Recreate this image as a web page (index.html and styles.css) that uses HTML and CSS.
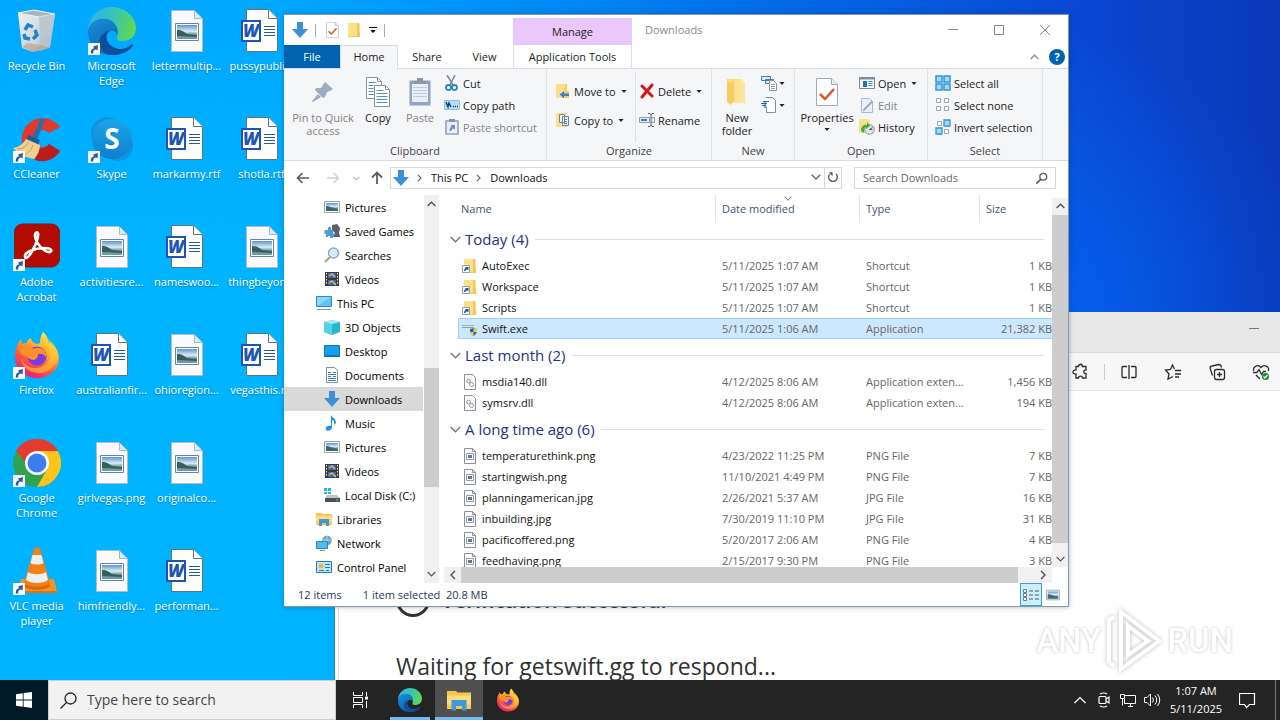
FILE: index.html
```html
<!DOCTYPE html>
<html lang="en">
<head>
<meta charset="utf-8">
<title>Downloads</title>
<link rel="stylesheet" href="styles.css">
</head>
<body>
<svg class="sprite" aria-hidden="true">
  <defs>
    <linearGradient id="g-edge-top" x1="0" y1="0.3" x2="1" y2="0.5"><stop offset="0" stop-color="#2fb3ea"/><stop offset="0.5" stop-color="#36c4b8"/><stop offset="1" stop-color="#63d84b"/></linearGradient>
    <linearGradient id="g-edge-left" x1="0" y1="0" x2="0.6" y2="1"><stop offset="0" stop-color="#1b8fd8"/><stop offset="1" stop-color="#0a62b4"/></linearGradient>
    <linearGradient id="g-fox" x1="0.8" y1="0" x2="0.25" y2="1"><stop offset="0" stop-color="#fff44f"/><stop offset="0.35" stop-color="#ffb02a"/><stop offset="0.65" stop-color="#ff5a3a"/><stop offset="1" stop-color="#e31587"/></linearGradient>
    <linearGradient id="g-scene" x1="0" y1="0" x2="0" y2="1"><stop offset="0" stop-color="#5f93d6"/><stop offset="0.45" stop-color="#dcecf5"/><stop offset="0.6" stop-color="#8fb3ad"/><stop offset="1" stop-color="#2f5b6c"/></linearGradient>
    <linearGradient id="g-folder" x1="0" y1="0" x2="1" y2="0"><stop offset="0" stop-color="#fbd978"/><stop offset="1" stop-color="#fce9a8"/></linearGradient>
    <linearGradient id="g-bin" x1="0" y1="0" x2="1" y2="1"><stop offset="0" stop-color="#eef2f4"/><stop offset="0.6" stop-color="#cfd8dc"/><stop offset="1" stop-color="#8fa3b0"/></linearGradient>
    <linearGradient id="g-skype" x1="0" y1="0" x2="0" y2="1"><stop offset="0" stop-color="#1aa6ea"/><stop offset="1" stop-color="#0f7fd0"/></linearGradient>
  </defs>

  <symbol id="link" viewBox="0 0 12 12"><path d="M0 0h12v12H0z" fill="#f6f8fa"/><path d="M3 10.500C2.500 7 4 5.500 6.200 5.200L5 3.500 10 2l-.5 5.500L8 6.500C6 6.500 5 8 5.200 10.500z" fill="#2c5b9c"/></symbol>

  <symbol id="bin" viewBox="0 0 48 48"><path d="M5 6l16-3 21 4-5 34-17 4-11-4z" fill="url(#g-bin)"/><path d="M5 6l16-3 21 4-16 3z" fill="#a9b6bf" stroke="#eef3f6"/><path d="M26 10l16-3-5 33-10 4z" fill="#b5c3cc" opacity=".8"/><path d="M9 40l11 5 17-4-9-3-14-2z" fill="#b98b6d" opacity=".45"/><g fill="none" stroke="#1f82cc" stroke-width="3.500"><path d="M12 23l3-5 5 2"/><path d="M22 23l2 5-4 4"/><path d="M17 32l-5-1-1-4"/></g></symbol>

  <symbol id="edge" viewBox="0 0 48 48"><path d="M0 24C0 10 11 0 24 0s24 10 24 21c0 9-7 13-14 13-5 0-6-2-4.500-4.500C31 25 29 13 17 12 8 12 3 16 0 24z" fill="url(#g-edge-top)"/><path d="M0 24c1-8 9-13 18-12 8 1 13 9 11.500 16C27 22 20 22 18 30c-1 9 7 15 17 15-5 3-12 4-19 2C6 44 0 35 0 24z" fill="url(#g-edge-left)"/><path d="M21 24c-5 4-3 16 10 18 5 .6 9-2 12-4 2-1 3 0 1 2-6 7-17 10-26 6-10-6-8-20 3-22z" fill="#114d99"/></symbol>

  <symbol id="image-doc" viewBox="0 0 48 48"><path d="M8.500 3.500h23l8 8v33h-31z" fill="#fafafa" stroke="#b5bcc2"/><path d="M31.500 3.500v8h8z" fill="#d3ecf9" stroke="#a9b7c2"/><path d="M12.500 16.500h23v17h-23z" fill="#fff" stroke="#5f86ad"/><path d="M14 18h20v14H14z" fill="url(#g-scene)"/><path d="M14 23c5 0 7 2 10 4l10 1v4H14z" fill="#355f58"/><path d="M14 29l20 1v2H14z" fill="#6f98b5"/></symbol>

  <symbol id="word-doc" viewBox="0 0 48 48"><path d="M8.500 2.500h22l9 9v33h-31z" fill="#fdfdfd" stroke="#61727f"/><path d="M30.500 2.500v9h9" fill="#fff" stroke="#61727f"/><path d="M26 19.500h11M26 22.500h11M26 25.500h11M26 28.500h11" stroke="#2b579a"/><path d="M4 14h18v20H4z" fill="#fff" stroke="#1d55b5" stroke-width="2"/><text x="13" y="30" class="word-letter">W</text></symbol>

  <symbol id="ccleaner" viewBox="0 0 48 48"><path d="M47 12A21 21 0 1 0 47 36l-11-7a8.500 8.500 0 1 1 0-11z" fill="#e3382c"/><path d="M47 36A21 21 0 0 1 22 45l4-12c4 1 7 0 10-4z" fill="#b81d1c"/><path d="M28 3l4 2-8 20-5-2z" fill="#2770ad"/><path d="M15 20l12 5-2 6-12-5z" fill="#1c5c96"/><path d="M13 24l14 6c0 7-4 12-6 14C14 43 5 39 0 33c6-1 10-4 13-9z" fill="#efcf94"/><path d="M4 34c7 0 9-3 12-7M11 40c5-2 8-6 9-10" fill="none" stroke="#c99c58"/></symbol>

  <symbol id="skype" viewBox="0 0 48 48"><circle cx="19" cy="18" r="16" fill="#1492de"/><circle cx="30" cy="31" r="15" fill="#1094dc"/><circle cx="24" cy="24" r="20" fill="url(#g-skype)"/><text x="24" y="34" class="skype-letter">S</text></symbol>

  <symbol id="acrobat" viewBox="0 0 48 48"><rect x="1.500" y="1" width="45" height="43" rx="8" fill="#b30b00" stroke="#7e1c22"/><path d="M12 33c0-4 10-8 20-8 6 0 8 3 5 4-5 1-14-8-15-16 0-5 4-5 3 0-1 8-9 22-12 22-1 0-1-1-1-2z" fill="none" stroke="#fff" stroke-width="2.600"/></symbol>

  <symbol id="firefox" viewBox="0 0 48 48"><path d="M30 1c4 3 5 7 5 10 8 3 11 10 11 16 0 12-10 20-22 20S2 38 2 26C2 18 4 13 8 8l1 5c2-1 3-1 5-1 0-2 1-4 4-5 0 3 2 5 6 6l3-1c0-4 1-8 3-11z" fill="url(#g-fox)"/><path d="M43 18c5 14-5 24-17 24-10 0-18-7-18-15 4 9 13 12 20 9 8-3 10-10 8-19l-6-12c8 4 12 8 13 13z" fill="#ffd13c" opacity=".55"/><circle cx="24" cy="25" r="9.500" fill="#7a3ce0"/><path d="M20 18c9-4 14 3 13 8-2-3-5-4-8-3 0 3-1 5-4 6-4 0-7-4-10-4-4-2-7-9-3-14 1 2 3 3 5 3 2-1 5-1 7 4z" fill="#ff902a"/></symbol>

  <symbol id="chrome" viewBox="0 0 48 48"><circle cx="24" cy="24" r="24" fill="#31a350"/><path d="M3.200 12A24 24 0 0 1 44.800 12H24L13.600 18z" fill="#e33b2e"/><path d="M3.200 12h.1L13 24l11-12h20.800A24 24 0 0 0 3.200 12z" fill="#e33b2e"/><path d="M24 12h20.800A24 24 0 0 1 24 48l10.400-18z" fill="#fcc51e"/><circle cx="24" cy="24" r="12" fill="#fff"/><circle cx="24" cy="24" r="9.500" fill="#3d7df0"/></symbol>

  <symbol id="vlc" viewBox="0 0 48 48"><path d="M8 32h33l3 13H5z" fill="#f7931e"/><path d="M5 44h39v2H5z" fill="#e2700c"/><path d="M21 2c1-2 5-2 6 0l10 34c-3 6-23 6-26 0z" fill="#f57f17"/><path d="M19.500 8h9l2 8c-3 2-10 2-13 0zM15 25c4 3 14 3 18 0l2 8c-5 4-17 4-22 0z" fill="#eceff1"/><path d="M11 36c3 5 23 5 26 0l0 3c-3 5-23 5-26 0z" fill="#d4690f"/></symbol>

  <symbol id="down" viewBox="0 0 16 16"><path d="M5 0h6v7h5l-8 9-8-9h5z" fill="#3c90d9"/></symbol>
  <symbol id="props" viewBox="0 0 22 28"><path d="M.5.5h15l6 6v21H.5z" fill="#fff" stroke="#a3a9ae"/><path d="M15.500.5v6h6" fill="#eee" stroke="#a3a9ae"/><path d="M4 16l5 5 9-10" fill="none" stroke="#e2552b" stroke-width="2.500"/></symbol>
  <symbol id="folder" viewBox="0 0 20 26"><path d="M0 0h14l4 4v18l2 2H4L0 23z" fill="url(#g-folder)"/><path d="M4 4l3-3v20l-3 5-4-3V2z" fill="#f5cd63"/></symbol>
  <symbol id="folder16" viewBox="0 0 16 16"><path d="M2 1h9l3 1v13H2z" fill="#fde08a"/><path d="M11 1h2v9h1v5H2v-1h9z" fill="#f3c756"/></symbol>
  <symbol id="folder-link" viewBox="0 0 16 16"><use href="#folder16"/><path d="M.5 7.500h7v7h-7z" fill="#fff" stroke="#8aa2b8"/><path d="M2 13c0-2 1-3 2-3L3 9h3.500v3.500l-1-1C4 11.500 3.500 12 3.500 13z" fill="#1d4fa0"/></symbol>
  <symbol id="pin" viewBox="0 0 22 22"><path d="M13 1l8 7-3 2-3 1-2 5-2 1-8-8 1-2h5l2-3zM6 13l3 3-8 5-1-1z" fill="#9badc0"/></symbol>
  <symbol id="copy" viewBox="0 0 26 30"><g fill="#fff" stroke="#88939d"><path d="M1.500.5h11l4 4v17h-15z"/><path d="M9.500 8.500h11l4 4v17h-15z"/><path d="M12.500.5v4h4M20.500 8.500v4h4" fill="none"/></g><path d="M3.500 5.500h8M3.500 8.500h5M3.500 11.500h5M3.500 14.500h5M3.500 17.500h5M11.500 13.500h7M11.500 16.500h11M11.500 19.500h11M11.500 22.500h11M11.500 25.500h11" stroke="#4f8fd2"/></symbol>
  <symbol id="paste" viewBox="0 0 22 30"><path d="M.5 3.500h21v25H.5z" fill="#8ea4c0"/><path d="M3 7h16v18H3z" fill="#e9eef7"/><path d="M5 4h12v3H5zM8 1h6v3H8z" fill="#8b98a8"/><path d="M4 10.500h14M4 13.500h14M4 16.500h14M4 19.500h14" stroke="#bccbdf"/></symbol>
  <symbol id="cut" viewBox="0 0 16 16"><path d="M3 0l6 10M11 0L6 10" stroke="#7e8a96" stroke-width="1.600"/><circle cx="4.500" cy="12.500" r="2.500" fill="none" stroke="#2c86c9" stroke-width="1.800"/><circle cx="10.500" cy="12.500" r="2.500" fill="none" stroke="#2c86c9" stroke-width="1.800"/></symbol>
  <symbol id="path" viewBox="0 0 16 16"><path d="M.5 3.500h15v9H.5z" fill="#b7dcf7" stroke="#8fc3ea"/><path d="M2 5l2 5 1-4 2 4M9 9.500h1M11 9.500h1M13 9.500h1" fill="none" stroke="#13406d" stroke-width="1.400"/></symbol>
  <symbol id="paste-link" viewBox="0 0 16 16"><path d="M2 2h12v13H2z" fill="#e9eef7" stroke="#8fa3bf" stroke-width="1.600"/><path d="M5 0h6v3H5z" fill="#8794a5"/><path d="M5.500 12c0-3 1-4 2-4L6.500 6H11v5L9.500 9.500c-1 0-2 1-2 2.500z" fill="#7790b4"/></symbol>
  <symbol id="move" viewBox="0 0 16 16"><path d="M1 1h11v14H1z" fill="#fbdf8c"/><path d="M10 1h2v7h2v7H9z" fill="#f3cd66"/><path d="M14 13H9v2.500L4.500 11.500 9 8v2.500h5z" fill="#3c7fc4"/></symbol>
  <symbol id="copyto" viewBox="0 0 16 16"><path d="M1 1h11v14H1z" fill="#fbdf8c"/><path d="M4.500 2.500h5v8h-5zM7.500 4.500h6v9h-6z" fill="#eff5fb" stroke="#6d8299"/><path d="M9 7.500h3M9 9.500h3M9 11.500h3" stroke="#4787c9"/></symbol>
  <symbol id="delete" viewBox="0 0 16 16"><path d="M3 3l10 10M13 2L3 14" stroke="#d8161c" stroke-width="3" stroke-linecap="round"/></symbol>
  <symbol id="rename" viewBox="0 0 16 16"><path d="M.5 5.500h10v5H.5zM12 5.500h3.500v5H12" fill="#e8f2fb" stroke="#8a9bab"/><path d="M2 7h6v2H2z" fill="#2f86cf"/><path d="M9 1.500h2l1 1 1-1h2M12 2v12M9 14.500h2l1-1 1 1h2" fill="none" stroke="#5a646e"/></symbol>
  <symbol id="newitem" viewBox="0 0 16 16"><path d="M.5 1.500h9v4h-9zM4.500 4.500h8v4h-8z" fill="#d7ecfa" stroke="#3b7fae"/><path d="M8.500 5.500h4l3 3v7h-7z" fill="#fff" stroke="#8b9299"/><path d="M10 9.500h4M10 11.500h4M10 13.500h4" stroke="#9aa1a8"/></symbol>
  <symbol id="easy" viewBox="0 0 16 16"><path d="M4.500.5h7l3 3v12h-9v-6" fill="#fff" stroke="#858c92"/><path d="M2 4.500h6M0 6.500h6M1 8.500h4M4 11V4" stroke="#1f6fb5" stroke-width="1.200"/></symbol>
  <symbol id="open" viewBox="0 0 16 16"><path d="M.5 2.500h15v11H.5z" fill="#fff" stroke="#7f8c98"/><path d="M.5 2.500h15v2H.5z" fill="#7f8c98"/><path d="M4 6h4v6H4z" fill="#1a74c6"/><path d="M9.500 6.500h4M9.500 8.500h4M9.500 10.500h4" stroke="#3c89d1"/></symbol>
  <symbol id="edit" viewBox="0 0 16 16"><path d="M2.500 1.500h8l3 3v11h-11z" fill="#eaf0f9" stroke="#aab8cc"/><path d="M14 5l-8 8-2 2 .5-3 8-8z" fill="#8ea2c0"/></symbol>
  <symbol id="history" viewBox="0 0 16 16"><path d="M0 0h9l2 1v13H0z" fill="#fbdf8c"/><circle cx="10.500" cy="10.500" r="4.800" fill="#e3e7ea" stroke="#858c92"/><path d="M10.500 10.500l3-2M10.500 10.500h3" stroke="#555"/><path d="M2 12c0-5 3-7 6-6V3l3 4-4 3V8C5 8 5 10 5 14z" fill="#3faf3b"/></symbol>
  <symbol id="selall" viewBox="0 0 16 16"><path d="M1 1h6v6H1zM9 1h6v6H9zM1 9h6v6H1zM9 9h6v6H9z" fill="#a7d8fa" stroke="#3095de" stroke-width="1.500"/></symbol>
  <symbol id="selnone" viewBox="0 0 16 16"><path d="M1.500 1.500h4v4h-4zM9.500 1.500h4v4h-4zM1.500 9.500h4v4h-4zM9.500 9.500h4v4h-4z" fill="#fff" stroke="#a2a7ac"/></symbol>
  <symbol id="selinv" viewBox="0 0 16 16"><path d="M2.500 2.500h4v4h-4zM9.500 10.500h4v4h-4z" fill="#fff" stroke="#a2a7ac"/><path d="M9 1h6v6H9zM1 9h6v6H1z" fill="#a7d8fa" stroke="#3095de" stroke-width="1.300"/></symbol>
  <symbol id="caret" viewBox="0 0 5 3"><path d="M0 0h5L2.500 3z" fill="#222"/></symbol>
  <symbol id="chev-down" viewBox="0 0 10 6"><path d="M.7.7L5 5 9.300.7" fill="none" stroke="currentColor" stroke-width="1.300"/></symbol>
  <symbol id="chev-up" viewBox="0 0 10 6"><path d="M.7 5.300L5 1l4.300 4.300" fill="none" stroke="currentColor" stroke-width="1.500"/></symbol>
  <symbol id="chev-right" viewBox="0 0 6 10"><path d="M1 1l4 4-4 4" fill="none" stroke="currentColor" stroke-width="1.400"/></symbol>
  <symbol id="chev-left" viewBox="0 0 6 10"><path d="M5 1L1 5l4 4" fill="none" stroke="currentColor" stroke-width="1.400"/></symbol>
  <symbol id="arrow-left" viewBox="0 0 14 12"><path d="M13 6H2M6.500 1L1.500 6l5 5" fill="none" stroke="currentColor" stroke-width="1.600"/></symbol>
  <symbol id="arrow-right" viewBox="0 0 14 12"><path d="M1 6h11M7.500 1l5 5-5 5" fill="none" stroke="currentColor" stroke-width="1.600"/></symbol>
  <symbol id="arrow-up" viewBox="0 0 12 14"><path d="M6 13V2M1 6.500l5-5 5 5" fill="none" stroke="currentColor" stroke-width="1.800"/></symbol>
  <symbol id="refresh" viewBox="0 0 14 14"><path d="M10.500 3.500A5 5 0 1 1 3 4" fill="none" stroke="currentColor" stroke-width="1.700"/><path d="M2 1.500h4.500V6z" fill="currentColor"/></symbol>
  <symbol id="magnify" viewBox="0 0 14 14"><circle cx="8.500" cy="5.500" r="4" fill="none" stroke="currentColor" stroke-width="1.500"/><path d="M5.500 8.500l-5 5" stroke="currentColor" stroke-width="2"/></symbol>

  <symbol id="n-pic" viewBox="0 0 16 16"><path d="M.5 2.500h15v11H.5z" fill="#fff" stroke="#8fa6b8"/><path d="M2 4h12v8H2z" fill="url(#g-scene)"/><path d="M2 7c4 0 6 2 12 3v2H2z" fill="#3d6a70"/></symbol>
  <symbol id="n-games" viewBox="0 0 16 16"><path d="M8 2l5-1 3 4-1 5 1 3v1H9l2-4-3-3z" fill="#5b6167"/><path d="M1 7h3V5c1-2 3-1 3 0v2h2v3c2 0 2 3 0 3v2H6v-2H4v1H2v-3c-2 0-2-3-1-4z" fill="#4f9dd0"/></symbol>
  <symbol id="n-search" viewBox="0 0 16 16"><path d="M6 10l-5 5" stroke="#b39a80" stroke-width="2"/><circle cx="9.500" cy="6" r="5" fill="#d6ecfa" stroke="#93a9bb" stroke-width="1.400"/></symbol>
  <symbol id="n-video" viewBox="0 0 16 16"><path d="M1 1h14v14H1z" fill="#3a3a3a"/><path d="M2.500 2v12M13.500 2v12" stroke="#eee" stroke-dasharray="1.500 1.500"/><path d="M4 2h8v5H4zM4 9h8v5H4z" fill="#3d62c9"/><path d="M5 5l3-2 3 3M5 12l3-2 4 4" stroke="#e1bd2f" stroke-width="1.500" fill="none"/></symbol>
  <symbol id="n-pc" viewBox="0 0 16 16"><path d="M.5 1.500h15v10H.5z" fill="#5cc3f3" stroke="#2c8bc6"/><path d="M1 2h14L1 11z" fill="#8bd8fa"/><path d="M1 14.500h14" stroke="#8d979f"/></symbol>
  <symbol id="n-3d" viewBox="0 0 16 16"><path d="M0 3l8-2 8 2v10l-8 3-8-3z" fill="#2bb6cf"/><path d="M0 3l8 2v11l-8-3z" fill="#55d3e2"/><path d="M0 3l8-2 8 2-8 2z" fill="#a6eef3"/></symbol>
  <symbol id="n-desk" viewBox="0 0 16 16"><path d="M.5 2.500h15v11H.5z" fill="#16a0f0" stroke="#0c73bd"/><path d="M1 12h14v1H1z" fill="#1176bb"/></symbol>
  <symbol id="n-doc" viewBox="0 0 16 16"><path d="M2.500.5h8l3 3v12h-11z" fill="#fff" stroke="#889099"/><path d="M4 5.500h3M9 5.500h3M4 7.500h8M4 9.500h3M9 9.500h3M4 11.500h8M4 13.500h8" stroke="#2f82c4"/></symbol>
  <symbol id="n-music" viewBox="0 0 16 16"><path d="M7 0c1 3 5 3 5 8l-2 2c1-4-1-5-2-5v7c0 3-4 5-6 3-1-2 1-5 5-4z" fill="#1b8fe0"/></symbol>
  <symbol id="n-disk" viewBox="0 0 16 16"><path d="M0 1h3v3H0zM4 1h3v3H4zM0 5h3v2H0zM4 5h3v2H4z" fill="#1fb7dd"/><path d="M3 8h10l3 3H1z" fill="#bfc6cb"/><path d="M1 11h15v4H1z" fill="#4b5359"/><path d="M12 13h2" stroke="#5fe05f"/></symbol>
  <symbol id="n-lib" viewBox="0 0 16 16"><path d="M0 2h6l1 1h9v11H0z" fill="#f6c84c"/><path d="M0 5h16v6H0z" fill="#fbdc7c"/><path d="M3 8h10v7h-3v-3H6v3H3z" fill="#3f97dc"/></symbol>
  <symbol id="n-net" viewBox="0 0 16 16"><circle cx="11" cy="5.500" r="4.800" fill="#6aa5c7"/><path d="M7 5h8M11 1v9" stroke="#b9d8e8"/><path d="M.5 6.500h11v7H.5z" fill="#4dbcf2" stroke="#2b87bd"/><path d="M4 15.500h5" stroke="#78909e"/></symbol>
  <symbol id="n-ctl" viewBox="0 0 16 16"><path d="M.5 2.500h15v11H.5z" fill="#bfe6fb" stroke="#1f7fbd"/><circle cx="5" cy="7" r="2.500" fill="#f2b63c"/><path d="M9 5.500h5M9 8.500h5M3 11.500h5M10 11.500h3" stroke="#1f7fbd"/></symbol>
  <symbol id="f-exe" viewBox="0 0 16 16"><path d="M0 4h12v1H0z" fill="#b7ad92"/><path d="M0 6h12v1H0z" fill="#8ea0b5"/><path d="M8 8l3.500-1L15 8c0 4-1 5-3.500 7C9 13 8 12 8 8z" fill="#2e5fb4"/><path d="M11.500 7L15 8v3h-3.500zM8.300 11h3.200v4c-2-1-3-2-3.200-4z" fill="#f4cf35"/></symbol>
  <symbol id="f-dll" viewBox="0 0 16 16"><path d="M2.500.5h8l3 3v12h-11z" fill="#fbfbfb" stroke="#8b9096"/><circle cx="6.500" cy="7" r="1.800" fill="none" stroke="#8d969e"/><circle cx="9.500" cy="10.500" r="2" fill="none" stroke="#8d969e"/></symbol>
  <symbol id="f-img" viewBox="0 0 16 16"><path d="M2.500.5h8l3 3v12h-11z" fill="#fbfbfb" stroke="#8b9096"/><path d="M10.500.5v3h3" fill="none" stroke="#8b9096"/><path d="M4.500 5.500h7v6h-7z" fill="#fff" stroke="#8e9bb0"/><path d="M6 7h4v3H6z" fill="#5c7c96"/></symbol>
</svg>

<div class="screen">
  <main class="desktop">
    <div class="icons">
      <button class="item"><svg class="pic"><use href="#bin"/></svg><span>Recycle Bin</span></button>
      <button class="item"><svg class="pic"><use href="#ccleaner"/></svg><svg class="badge"><use href="#link"/></svg><span>CCleaner</span></button>
      <button class="item"><svg class="pic"><use href="#acrobat"/></svg><svg class="badge"><use href="#link"/></svg><span>Adobe<br>Acrobat</span></button>
      <button class="item"><svg class="pic"><use href="#firefox"/></svg><svg class="badge"><use href="#link"/></svg><span>Firefox</span></button>
      <button class="item"><svg class="pic"><use href="#chrome"/></svg><svg class="badge"><use href="#link"/></svg><span>Google<br>Chrome</span></button>
      <button class="item"><svg class="pic"><use href="#vlc"/></svg><svg class="badge"><use href="#link"/></svg><span>VLC media<br>player</span></button>
      <button class="item"><svg class="pic"><use href="#edge"/></svg><svg class="badge"><use href="#link"/></svg><span>Microsoft<br>Edge</span></button>
      <button class="item"><svg class="pic"><use href="#skype"/></svg><svg class="badge"><use href="#link"/></svg><span>Skype</span></button>
      <button class="item"><svg class="pic"><use href="#image-doc"/></svg><span>activitiesre...</span></button>
      <button class="item"><svg class="pic"><use href="#word-doc"/></svg><span>australianfir...</span></button>
      <button class="item"><svg class="pic"><use href="#image-doc"/></svg><span>girlvegas.png</span></button>
      <button class="item"><svg class="pic"><use href="#image-doc"/></svg><span>himfriendly...</span></button>
      <button class="item"><svg class="pic"><use href="#image-doc"/></svg><span>lettermultip...</span></button>
      <button class="item"><svg class="pic"><use href="#word-doc"/></svg><span>markarmy.rtf</span></button>
      <button class="item"><svg class="pic"><use href="#word-doc"/></svg><span>nameswoo...</span></button>
      <button class="item"><svg class="pic"><use href="#image-doc"/></svg><span>ohioregion...</span></button>
      <button class="item"><svg class="pic"><use href="#image-doc"/></svg><span>originalco...</span></button>
      <button class="item"><svg class="pic"><use href="#word-doc"/></svg><span>performan...</span></button>
      <button class="item"><svg class="pic"><use href="#word-doc"/></svg><span>pussypubli...</span></button>
      <button class="item"><svg class="pic"><use href="#word-doc"/></svg><span>shotla.rtf</span></button>
      <button class="item"><svg class="pic"><use href="#image-doc"/></svg><span>thingbeyon...</span></button>
      <button class="item"><svg class="pic"><use href="#word-doc"/></svg><span>vegasthis.rtf</span></button>
    </div>

    <section class="browser" aria-label="Browser">
      <div class="browser-title">
        <button class="plain" aria-label="Minimize"><svg width="10" height="10" viewBox="0 0 10 10"><path d="M0 5.500h10" stroke="#777"/></svg></button>
      </div>
      <div class="browser-tools">
        <button class="plain" aria-label="Extensions"><svg width="18" height="18" viewBox="0 0 18 18" class="line"><path d="M5 3.500h2.500c0-3 4-3 4 0H15v3.500c-3-.5-3 4 0 3.500v4.500h-3.500c0-2.500-4-2.500-4 0H5v-4c-4 .5-4-4.500 0-4z"/></svg></button>
        <span class="tool-rule"></span>
        <button class="plain" aria-label="Split screen"><svg width="18" height="18" viewBox="0 0 18 18" class="line"><path d="M7 3.500H3q-1 0-1 1v9q0 1 1 1h4M11 3.500h4q1 0 1 1v9q0 1-1 1h-4M9 2v14"/></svg></button>
        <button class="plain" aria-label="Favorites"><svg width="18" height="18" viewBox="0 0 18 18" class="line"><path d="M10.500 6L8.500 2 6.500 6.500 1.500 7l3.500 4-1 5 5-2.500M11 7.500h6M11 11h6M11 14h4"/></svg></button>
        <button class="plain" aria-label="Collections"><svg width="18" height="18" viewBox="0 0 18 18" class="line"><rect x="6.500" y="6.500" width="10" height="10" rx="2"/><path d="M11.500 9v5M9 11.500h5M4.500 12.500L2 5q0-2 2-2l7-1.500q2 0 2.500 3"/></svg></button>
        <button class="plain" aria-label="Browser essentials"><svg width="18" height="18" viewBox="0 0 18 18" class="line"><path d="M1.500 8C1 3 6 1 9 4.500 12 1 17.500 3 16.500 8M1 9.500h4l2-3 2.500 5 2-3H14M4 12l4 4"/><circle cx="13.500" cy="13.500" r="3.500" fill="#1c8a34" stroke="none"/><path d="M11.500 13.500l1.500 1.500 2.500-3" stroke="#cfe"/></svg></button>
      </div>
      <div class="page">
        <div class="verified"><span class="ring"></span><h1>Verification successful</h1></div>
        <p class="waiting">Waiting for getswift.gg to respond...</p>
      </div>
      <div class="mark" aria-label="ANY.RUN"><span>ANY</span><svg width="60" height="64" viewBox="0 0 60 64"><g fill="none" stroke="#fff" stroke-width="4"><path d="M17 3v57l38-28zM10 8l-5 3v42l5 4M24 17v29l20-14z"/></g></svg><span>RUN</span></div>
    </section>

    <section class="explorer" aria-label="Downloads">
      <header class="titlebar">
        <div class="quick">
          <svg width="16" height="16"><use href="#down"/></svg><i class="vr"></i>
          <button class="plain" aria-label="Properties"><svg width="13" height="16"><use href="#props"/></svg></button>
          <button class="plain" aria-label="New folder"><svg width="16" height="18"><use href="#folder16"/></svg></button>
          <button class="plain" aria-label="Customize"><svg width="8" height="8" viewBox="0 0 8 8"><path d="M0 1.500h8M2 4.500h4L4 6.500z" fill="#111" stroke="#111"/></svg></button><i class="vr"></i>
        </div>
        <div class="manage">Manage</div>
        <div class="caption">Downloads</div>
        <div class="controls">
          <button class="plain" aria-label="Minimize"><svg width="10" height="10" viewBox="0 0 10 10"><path d="M0 4.500h10" stroke="#8a8a8a"/></svg></button>
          <button class="plain" aria-label="Maximize"><svg width="10" height="10" viewBox="0 0 10 10"><path d="M.5.5h9v9h-9z" fill="none" stroke="#888"/></svg></button>
          <button class="plain" aria-label="Close"><svg width="10" height="10" viewBox="0 0 10 10"><path d="M0 0l10 10M10 0L0 10" stroke="#888"/></svg></button>
        </div>
      </header>
      <nav class="tabs">
        <button class="tab file">File</button>
        <button class="tab active">Home</button>
        <button class="tab">Share</button>
        <button class="tab">View</button>
        <button class="tab tools">Application Tools</button>
        <span class="tabs-end">
          <button class="plain grey" aria-label="Collapse ribbon"><svg width="9" height="6"><use href="#chev-up"/></svg></button>
          <button class="help" aria-label="Help">?</button>
        </span>
      </nav>

      <div class="ribbon">
        <div class="group clip">
          <div class="body">
            <button class="big off wide"><svg width="22" height="30" viewBox="0 0 22 30"><use href="#pin" y="4" width="22" height="22"/></svg><span>Pin to Quick<br>access</span></button>
            <button class="big"><svg width="26" height="30"><use href="#copy"/></svg><span>Copy</span></button>
            <button class="big off"><svg width="22" height="30"><use href="#paste"/></svg><span>Paste</span></button>
            <div class="stack">
              <button class="small"><svg><use href="#cut"/></svg>Cut</button>
              <button class="small"><svg><use href="#path"/></svg>Copy path</button>
              <button class="small off"><svg><use href="#paste-link"/></svg>Paste shortcut</button>
            </div>
          </div>
          <div class="name">Clipboard</div>
        </div>
        <div class="group org">
          <div class="body">
            <div class="stack two first">
              <button class="small"><svg><use href="#move"/></svg>Move to<svg class="car"><use href="#caret"/></svg></button>
              <button class="small"><svg><use href="#copyto"/></svg>Copy to<svg class="car"><use href="#caret"/></svg></button>
            </div>
            <div class="stack two">
              <button class="small"><svg><use href="#delete"/></svg>Delete<svg class="car"><use href="#caret"/></svg></button>
              <button class="small"><svg><use href="#rename"/></svg>Rename</button>
            </div>
          </div>
          <div class="name">Organize</div>
        </div>
        <div class="group new">
          <div class="body">
            <button class="big"><svg width="20" height="30" viewBox="0 0 20 30"><use href="#folder" y="2" width="20" height="26"/></svg><span>New<br>folder</span></button>
            <div class="stack">
              <button class="small" aria-label="New item"><svg><use href="#newitem"/></svg><svg class="car"><use href="#caret"/></svg></button>
              <button class="small" aria-label="Easy access"><svg><use href="#easy"/></svg><svg class="car"><use href="#caret"/></svg></button>
            </div>
          </div>
          <div class="name">New</div>
        </div>
        <div class="group opn">
          <div class="body">
            <button class="big wide"><svg width="22" height="30"><use href="#props"/></svg><span>Properties</span><svg class="car"><use href="#caret"/></svg></button>
            <div class="stack">
              <button class="small"><svg><use href="#open"/></svg>Open<svg class="car"><use href="#caret"/></svg></button>
              <button class="small off"><svg><use href="#edit"/></svg>Edit</button>
              <button class="small"><svg><use href="#history"/></svg>History</button>
            </div>
          </div>
          <div class="name">Open</div>
        </div>
        <div class="group sel">
          <div class="body">
            <div class="stack">
              <button class="small"><svg><use href="#selall"/></svg>Select all</button>
              <button class="small"><svg><use href="#selnone"/></svg>Select none</button>
              <button class="small"><svg><use href="#selinv"/></svg>Invert selection</button>
            </div>
          </div>
          <div class="name">Select</div>
        </div>
      </div>

      <div class="address">
        <div class="travel">
          <button class="plain" aria-label="Back"><svg width="14" height="12"><use href="#arrow-left"/></svg></button>
          <button class="plain faint" aria-label="Forward"><svg width="14" height="12"><use href="#arrow-right"/></svg></button>
          <button class="plain grey" aria-label="Recent"><svg width="7" height="5"><use href="#chev-down"/></svg></button>
          <button class="plain" aria-label="Up"><svg width="12" height="14"><use href="#arrow-up"/></svg></button>
        </div>
        <div class="crumbs">
          <svg width="16" height="16"><use href="#down"/></svg>
          <svg class="sep"><use href="#chev-right"/></svg><button class="plain">This PC</button>
          <svg class="sep"><use href="#chev-right"/></svg><button class="plain">Downloads</button>
          <button class="plain drop" aria-label="Previous locations"><svg width="10" height="6"><use href="#chev-down"/></svg></button>
          <button class="plain reload" aria-label="Refresh"><svg width="12" height="12"><use href="#refresh"/></svg></button>
        </div>
        <label class="find"><input type="text" placeholder="Search Downloads" aria-label="Search Downloads"><svg width="12" height="12"><use href="#magnify"/></svg></label>
      </div>

      <div class="content">
        <nav class="tree">
          <a href="#"><svg><use href="#n-pic"/></svg>Pictures</a>
          <a href="#"><svg><use href="#n-games"/></svg>Saved Games</a>
          <a href="#"><svg><use href="#n-search"/></svg>Searches</a>
          <a href="#"><svg><use href="#n-video"/></svg>Videos</a>
          <a href="#" class="root"><svg><use href="#n-pc"/></svg>This PC</a>
          <a href="#"><svg><use href="#n-3d"/></svg>3D Objects</a>
          <a href="#"><svg><use href="#n-desk"/></svg>Desktop</a>
          <a href="#"><svg><use href="#n-doc"/></svg>Documents</a>
          <a href="#" class="here"><svg><use href="#down"/></svg>Downloads</a>
          <a href="#"><svg><use href="#n-music"/></svg>Music</a>
          <a href="#"><svg><use href="#n-pic"/></svg>Pictures</a>
          <a href="#"><svg><use href="#n-video"/></svg>Videos</a>
          <a href="#"><svg><use href="#n-disk"/></svg>Local Disk (C:)</a>
          <a href="#" class="root"><svg><use href="#n-lib"/></svg>Libraries</a>
          <a href="#" class="root"><svg><use href="#n-net"/></svg>Network</a>
          <a href="#" class="root"><svg><use href="#n-ctl"/></svg>Control Panel</a>
        </nav>
        <div class="vbar tree-bar"><svg><use href="#chev-up"/></svg><div class="track"><div class="thumb"></div></div><svg><use href="#chev-down"/></svg></div>
        <div class="files">
          <div class="list">
            <table>
              <colgroup><col><col class="c-date"><col class="c-type"><col class="c-size"></colgroup>
              <thead><tr><th>Name</th><th>Date modified<svg class="sort"><use href="#chev-down"/></svg></th><th>Type</th><th>Size</th></tr></thead>
              <tbody>
                <tr class="cat"><th colspan="4"><div><svg><use href="#chev-down"/></svg>Today (4)<hr></div></th></tr>
                <tr><td><svg><use href="#folder-link"/></svg>AutoExec</td><td>5/11/2025 1:07 AM</td><td>Shortcut</td><td>1 KB</td></tr>
                <tr><td><svg><use href="#folder-link"/></svg>Workspace</td><td>5/11/2025 1:07 AM</td><td>Shortcut</td><td>1 KB</td></tr>
                <tr><td><svg><use href="#folder-link"/></svg>Scripts</td><td>5/11/2025 1:07 AM</td><td>Shortcut</td><td>1 KB</td></tr>
                <tr class="chosen"><td><svg><use href="#f-exe"/></svg>Swift.exe</td><td>5/11/2025 1:06 AM</td><td>Application</td><td>21,382 KB</td></tr>
              </tbody>
              <tbody>
                <tr class="cat"><th colspan="4"><div><svg><use href="#chev-down"/></svg>Last month (2)<hr></div></th></tr>
                <tr><td><svg><use href="#f-dll"/></svg>msdia140.dll</td><td>4/12/2025 8:06 AM</td><td>Application exten...</td><td>1,456 KB</td></tr>
                <tr><td><svg><use href="#f-dll"/></svg>symsrv.dll</td><td>4/12/2025 8:06 AM</td><td>Application exten...</td><td>194 KB</td></tr>
              </tbody>
              <tbody>
                <tr class="cat"><th colspan="4"><div><svg><use href="#chev-down"/></svg>A long time ago (6)<hr></div></th></tr>
                <tr><td><svg><use href="#f-img"/></svg>temperaturethink.png</td><td>4/23/2022 11:25 PM</td><td>PNG File</td><td>7 KB</td></tr>
                <tr><td><svg><use href="#f-img"/></svg>startingwish.png</td><td>11/10/2021 4:49 PM</td><td>PNG File</td><td>7 KB</td></tr>
                <tr><td><svg><use href="#f-img"/></svg>planningamerican.jpg</td><td>2/26/2021 5:37 AM</td><td>JPG File</td><td>16 KB</td></tr>
                <tr><td><svg><use href="#f-img"/></svg>inbuilding.jpg</td><td>7/30/2019 11:10 PM</td><td>JPG File</td><td>31 KB</td></tr>
                <tr><td><svg><use href="#f-img"/></svg>pacificoffered.png</td><td>5/20/2017 2:06 AM</td><td>PNG File</td><td>4 KB</td></tr>
                <tr><td><svg><use href="#f-img"/></svg>feedhaving.png</td><td>2/15/2017 9:30 PM</td><td>PNG File</td><td>3 KB</td></tr>
              </tbody>
            </table>
          </div>
          <div class="vbar list-bar"><svg><use href="#chev-up"/></svg><div class="track"><div class="thumb"></div></div><svg><use href="#chev-down"/></svg></div>
          <div class="hbar"><svg><use href="#chev-left"/></svg><div class="track"><div class="thumb"></div></div><svg><use href="#chev-right"/></svg></div>
        </div>
      </div>
      <footer class="status">
        <span>12 items</span><span>1 item selected&nbsp; 20.8 MB</span>
        <div class="modes">
          <button class="mode on" aria-label="Details"><svg width="16" height="14" viewBox="0 0 16 14"><path d="M.5 1.500h3v3h-3zM.5 5.500h3v3h-3zM.5 9.500h3v3h-3z" fill="#fff" stroke="#6f7d88"/><path d="M6 3h4M12 3h4M6 7h4M12 7h4M6 11h4M12 11h4" stroke="#4b5a66"/></svg></button>
          <button class="mode" aria-label="Large icons"><svg width="14" height="14" viewBox="0 0 16 16"><use href="#n-pic"/></svg></button>
        </div>
      </footer>
    </section>
  </main>

  <footer class="taskbar">
    <button class="start" aria-label="Start"><svg width="16" height="16" viewBox="0 0 16 16"><path d="M0 2.200L6.800 1.200v6.400H0zM7.600 1.100L16 0v7.600H7.600zM0 8.400h6.800v6.400L0 13.800zM7.600 8.400H16V16l-8.400-1.200z" fill="#fff"/></svg></button>
    <label class="search"><svg width="17" height="17" viewBox="0 0 17 17"><circle cx="10.500" cy="6.500" r="5.500" fill="none" stroke="#222" stroke-width="1.300"/><path d="M6.500 10.500L.5 16.500" stroke="#222" stroke-width="1.300"/></svg><input type="text" placeholder="Type here to search" aria-label="Type here to search"></label>
    <button class="app" aria-label="Task view"><svg width="17" height="16" viewBox="0 0 17 16"><path d="M1.500 0v3.500h9V0M1.500 16v-3.500h9V16M1.500 5.500h9v5h-9zM14.500 0v4M14.500 9v7" fill="none" stroke="#fff"/><path d="M13 4.500h3v3h-3z" fill="#fff"/></svg></button>
    <button class="app open" aria-label="Microsoft Edge"><svg width="24" height="24"><use href="#edge"/></svg></button>
    <button class="app open current" aria-label="File Explorer"><svg width="24" height="24"><use href="#n-lib"/></svg></button>
    <button class="app" aria-label="Firefox"><svg width="24" height="24"><use href="#firefox"/></svg></button>
    <div class="tray">
      <button class="plain" aria-label="Show hidden icons"><svg width="12" height="8" viewBox="0 0 12 8"><path d="M.5 7L6 1.500 11.500 7" fill="none" stroke="#fff" stroke-width="1.200"/></svg></button>
      <button class="plain" aria-label="Meet now"><svg width="16" height="16" viewBox="0 0 16 16"><g fill="none" stroke="#fff" stroke-width="1.200"><rect x="3" y="4.500" width="7" height="7" rx="1"/><path d="M10 7l3-2v6l-3-2M4 2q4-2 7 0M4 14q4 2 7 0"/></g></svg></button>
      <button class="plain" aria-label="Network"><svg width="16" height="16" viewBox="0 0 16 16"><path d="M5 3.500h10.500v8H4.500V7M.5 2.500h4v4h-4zM2.500 7v6.500M8 14.500h5M10.500 12v2" fill="none" stroke="#fff"/></svg></button>
      <button class="plain" aria-label="Volume"><svg width="17" height="16" viewBox="0 0 17 16"><path d="M.5 5.500H3L6.500 2v12L3 10.500H.5zM8.500 5.500q2 2.500 0 5M11 3.500q3.500 4.500 0 9M13.500 2q4.500 6 0 12" fill="none" stroke="#fff"/></svg></button>
      <div class="clock"><span>1:07 AM</span><span>5/11/2025</span></div>
      <button class="plain note" aria-label="Notifications"><svg width="17" height="17" viewBox="0 0 17 17"><path d="M.5 1.500h15v11h-5l-3 3-2-3h-5z" fill="none" stroke="#fff" stroke-width="1.200"/></svg></button>
    </div>
  </footer>
</div>
</body>
</html>
```
FILE: styles.css
```css
* { box-sizing: border-box; }
html, body { height: 100%; }
body {
  margin: 0;
  font: 11px/15px "Open Sans", "Noto Sans", sans-serif;
  color: #1b1b1b;
  overflow: hidden;
}
button, input { font: inherit; color: inherit; border: 0; padding: 0; margin: 0; background: none; }
svg { display: block; flex: none; }
.sprite { position: absolute; width: 0; height: 0; }
.plain { display: flex; align-items: center; justify-content: center; }
.line path, .line rect { fill: none; stroke: #2b2b2b; stroke-width: 1.3px; }
.line path[stroke] { stroke: #d5ffe0; }
.word-letter { font: italic 800 17px "Open Sans", sans-serif; fill: #1d55b5; text-anchor: middle; }
.skype-letter { font: 700 28px "Open Sans", sans-serif; fill: #fff; text-anchor: middle; }

.screen { height: 100%; display: flex; flex-direction: column; }
.desktop {
  flex: 1;
  min-height: 0;
  position: relative;
  overflow: hidden;
  background:
    radial-gradient(circle at 80% 48%, rgba(0, 110, 255, .7), rgba(0, 90, 240, 0) 300px),
    linear-gradient(180deg, rgba(0, 184, 255, 0), rgba(0, 184, 255, .7) 40%) 0 0 / 30% 100% no-repeat,
    linear-gradient(90deg, #00a9ff 0%, #00a8ff 22%, #0086f6 45%, #0068e8 62%, #0a48d2 84%, #0a38b8 100%);
}

/* desktop shortcuts */
.icons {
  display: grid;
  grid-auto-flow: column;
  grid-template-rows: repeat(6, 108px);
  grid-auto-columns: 75px;
  justify-content: start;
  margin-left: -1px;
}
.item {
  position: relative;
  display: flex;
  flex-direction: column;
  align-items: center;
  justify-content: flex-start;
  gap: 3px;
  padding-top: 7px;
  color: #fff;
  white-space: nowrap;
}
.pic { width: 48px; height: 48px; }
.badge { position: absolute; left: 14px; top: 43px; width: 12px; height: 12px; }
.item span { text-shadow: 0 1px 1px rgba(0, 60, 110, .5); }

/* browser window */
.browser {
  position: absolute;
  inset: 312px 0 0 334px;
  display: flex;
  flex-direction: column;
  background: #fff;
  border-left: 1px solid #2b86b5;
}
.browser-title { flex: none; height: 40px; background: #e8e8e8; display: flex; justify-content: flex-end; padding: 0 21px 8px; }
.browser-tools {
  flex: none;
  height: 39px;
  background: #f7f7f7;
  border-top: 1px solid #dcdcdc;
  border-bottom: 1px solid #e6e6e6;
  display: flex;
  align-items: center;
  justify-content: flex-end;
  gap: 26px;
  padding-right: 10px;
}
.browser-tools .tool-rule { margin: 0 -11px; }
.tool-rule { width: 1px; height: 16px; background: #ccc; }
.page { flex: 1; min-height: 0; overflow: hidden; margin-left: 3px; padding: 192px 57px 0; border-left: 1px solid #ddd; color: #313131; }
.verified { display: flex; align-items: center; gap: 11px; }
.ring { width: 34px; height: 34px; border: 3px solid #313131; border-radius: 50%; }
h1 { margin: 0; font-size: 21px; line-height: 34px; font-weight: 600; }
.waiting { margin: 31px 0 0; font-size: 23px; line-height: 36px; }
.mark {
  position: absolute;
  right: 47px;
  bottom: 7px;
  display: flex;
  align-items: center;
  gap: 3px;
  color: #fff;
  font: 500 33px/40px Roboto, sans-serif;
  text-shadow: 0 0 3px #bbb;
}
.mark svg { filter: drop-shadow(0 0 2px #bbb); }

/* explorer window */
.explorer {
  position: absolute;
  inset: 14px 211px 73px 284px;
  display: flex;
  flex-direction: column;
  background: #fff;
  border: 1px solid #8797a3;
  border-left: 0;
  box-shadow: 0 0 5px rgba(0, 40, 80, .35);
  overflow: hidden;
}
.titlebar { height: 30px; display: flex; }
.quick { width: 229px; display: flex; align-items: center; padding-left: 8px; gap: 7px; }
.vr { width: 1px; height: 13px; margin-right: 3px; background: #aaa; }
.manage { width: 119px; margin-top: 3px; background: #eac8fb; text-align: center; line-height: 28px; }
.caption { flex: 1; padding-left: 13px; line-height: 30px; color: #8b8b8b; }
.controls { display: flex; }
.controls .plain { width: 46px; }
.tabs { height: 24px; display: flex; border-bottom: 1px solid #dadbdc; }
.tab { height: 23px; width: 58px; }
.file { width: 56px; background: #0063b1; color: #fff; }
.active { height: 24px; padding-bottom: 2px; background: #f5f6f7; border: 1px solid #dadbdc; border-bottom: 0; }
.tools { width: 119px; border: solid #ead9f2; border-width: 0 1px; }
.tabs .tab:nth-child(4) { width: 57px; }
.tabs-end { margin-left: auto; display: flex; align-items: center; gap: 10px; padding-right: 3px; }
.help { width: 16px; height: 16px; border-radius: 50%; background: #0063b1; color: #fff; font-weight: 700; }
.grey { color: #8a8a8a; }
.faint { color: #d2d2d2; }

.ribbon { height: 92px; display: flex; background: #f5f6f7; border-bottom: 1px solid #dadbdc; }
.group { display: flex; flex-direction: column; border-right: 1px solid #e0e2e4; }
.clip { width: 263px; }
.org { width: 165px; }
.new { width: 83px; }
.opn { width: 133px; }
.sel { width: 115px; }
.body { height: 73px; display: flex; padding: 3px 4px 0; }
.name { text-align: center; color: #444; line-height: 17px; }
.big { width: 40px; display: flex; flex-direction: column; align-items: center; justify-content: flex-start; gap: 4px; padding-top: 5px; line-height: 13px; }
.big.wide { width: 70px; }
.off { color: #838383; }
.stack { display: flex; flex-direction: column; }
.small { height: 22px; display: flex; align-items: center; gap: 3px; white-space: nowrap; }
.small svg { width: 16px; height: 16px; }
.small .car, .big .car { width: 6px; height: 3px; }
.small .car { margin-left: 2px; }
.clip .stack { margin-left: 4px; }
.clip .big + .big + .big { margin-left: 2px; }
.two { padding-top: 8px; gap: 7px; }
.two.first { width: 81px; border-right: 1px solid #e0e2e4; }
.org .body { padding-left: 8px; gap: 3px; }
.new .stack { margin-left: 3px; }
.new .small { gap: 0; }
.opn .body { padding: 3px 0 0; }
.opn .wide { width: 64px; }
.sel .body { padding-left: 7px; }
.new .big { width: 42px; }

.address { height: 34px; display: flex; align-items: center; gap: 12px; padding: 0 12px; color: #5a5a5a; }
.travel { display: flex; gap: 16px; margin-right: -5px; }
.travel .faint + .plain { margin-right: -5px; margin-left: -3px; }
.crumbs { flex: 1; height: 22px; display: flex; align-items: center; border: 1px solid #d9d9d9; padding-left: 2px; color: #111; }
.crumbs > .plain { height: 20px; padding-bottom: 2px; }
.sep { width: 5px; height: 8px; margin: 0 9px 0 8px; color: #666; }
.crumbs .drop { margin-left: auto; width: 16px; color: #666; }
.crumbs .reload { width: 17px; border-left: 1px solid #d9d9d9; color: #555; }
.find { width: 202px; height: 22px; display: flex; align-items: center; border: 1px solid #d9d9d9; padding: 0 7px 0 8px; }
.find input { flex: 1; min-width: 0; outline: 0; padding-bottom: 2px; }
.find input::placeholder { color: #666; opacity: 1; }

.content { flex: 1; min-height: 0; display: flex; }
.tree { width: 139px; display: flex; flex-direction: column; overflow: hidden; }
.tree a { height: 24px; flex: none; display: flex; align-items: center; gap: 5px; padding-left: 40px; color: #000; text-decoration: none; white-space: nowrap; }
.tree a.root { padding-left: 32px; }
.tree svg { width: 16px; height: 16px; }
.tree .here { background: #d9d9d9; }
.vbar, .hbar { display: flex; align-items: center; background: #f0f0f0; color: #505050; }
.vbar { flex-direction: column; width: 16px; padding: 6px 0; gap: 6px; }
.vbar > svg { width: 9px; height: 6px; }
.track { flex: 1; align-self: stretch; display: flex; }
.vbar .track { flex-direction: column; }
.thumb { background: #cdcdcd; }
.tree-bar { width: 15px; margin-left: 1px; }
.tree-bar .thumb { margin-top: 155px; height: 119px; }
.tree-bar .track { min-height: 0; }
.files { flex: 1; min-width: 0; margin-left: 5px; display: grid; grid-template-columns: 1fr 16px; grid-template-rows: 1fr 16px; }
.list { min-height: 0; overflow: hidden; padding-left: 14px; }
.list-bar { margin-top: 3px; padding: 5px 0; }
.list-bar .thumb { height: 98%; }
.hbar { padding: 0 6px; gap: 5px; }
.hbar > svg { width: 6px; height: 10px; }
.hbar .thumb { width: 97%; }

table { width: 100%; table-layout: fixed; border-collapse: separate; border-spacing: 0; }
.c-date { width: 144px; }
.c-type { width: 120px; }
.c-size { width: 72px; }
th { font-weight: 400; text-align: left; color: #44546f; }
thead th { position: relative; height: 28px; padding: 0 6px 2px; border-right: 1px solid #e5e5e5; }
thead th:first-child { padding-left: 3px; }
thead th:last-child { border-right: 0; }
.sort { position: absolute; top: 1px; left: 68px; width: 8px; height: 5px; color: #888; }
.cat th { height: 32px; padding: 0; }
.cat div { display: flex; align-items: center; gap: 4px; margin: 0 8px 0 -8px; font-size: 15px; line-height: 20px; color: #1e3287; }
.cat svg { width: 11px; height: 7px; color: #777; }
hr { flex: 1; margin: 0 0 0 2px; border: 0; border-top: 1px solid #e1e1e1; }
td { height: 21px; padding: 0 6px; color: #666; white-space: nowrap; overflow: hidden; }
td:first-child { display: flex; align-items: center; gap: 4px; padding-left: 4px; color: #111; }
td:last-child { text-align: right; padding: 0; }
td svg { width: 16px; height: 16px; }
.chosen td { background: #cce8ff; border: solid #99d1ff; border-width: 1px 0; }
.chosen td:first-child { border-left-width: 1px; padding-left: 3px; }

.status { height: 23px; display: flex; align-items: center; gap: 21px; padding-left: 14px; color: #1e395b; }
.modes { margin-left: auto; display: flex; align-self: stretch; padding-right: 4px; }
.mode { width: 22px; display: flex; align-items: center; justify-content: center; }
.mode.on { background: #cceeff; border: 1px solid #3ba0cf; }

/* taskbar */
.taskbar { height: 40px; display: flex; background: #242424; color: #fff; }
.start { width: 48px; display: flex; align-items: center; justify-content: center; background: #001a26; }
.search { width: 288px; display: flex; align-items: center; gap: 10px; padding: 0 11px; background: #f2f2f2; border: 1px solid #cfcfcf; }
.search input { flex: 1; min-width: 0; outline: 0; font-size: 14px; line-height: 20px; }
.search input::placeholder { color: #444; opacity: 1; }
.app { position: relative; width: 48px; display: flex; align-items: center; justify-content: center; margin-right: 1px; }
.app.open { margin: 0 1px; }
.app.open.current { margin: 0 1px 0 0; }
.open::after { content: ""; position: absolute; left: 4px; right: 4px; bottom: 0; height: 3px; background: #76b9ed; }
.current { background: #505050; }
.current::after { left: 0; right: 0; }
.tray { margin-left: auto; display: flex; align-items: center; gap: 8px; padding-right: 4px; }
.tray .plain { width: 16px; }
.clock { width: 56px; margin-right: 6px; display: flex; flex-direction: column; align-items: center; line-height: 18px; }
.tray .note { width: 38px; height: 40px; border-right: 1px solid #777; padding-right: 19px; }
```
